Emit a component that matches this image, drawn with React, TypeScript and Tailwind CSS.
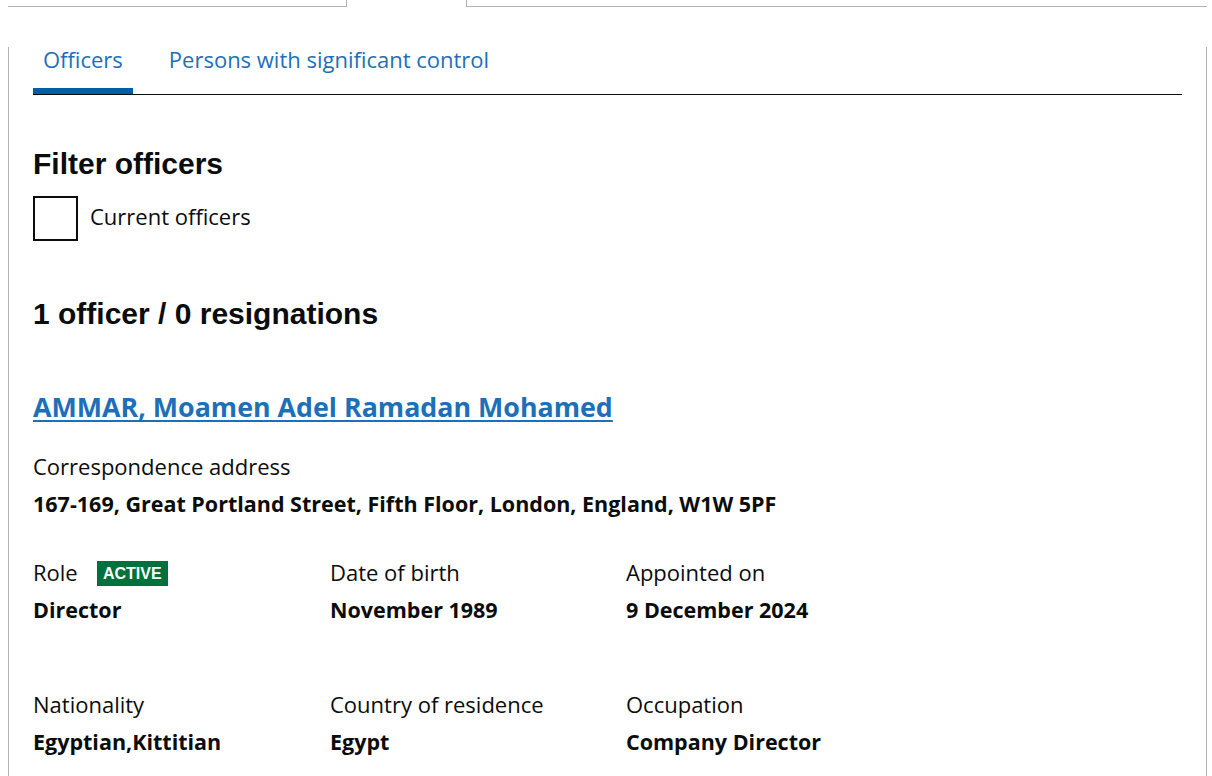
const FONT = "font-['Open_Sans',_'Liberation_Sans',_sans-serif]";
const HEAD = "font-['Liberation_Sans',_Arial,_sans-serif]";

type Field = { label: string; value: string; badge?: string };

const fields: Field[] = [
  { label: 'Role', value: 'Director', badge: 'Active' },
  { label: 'Date of birth', value: 'November 1989' },
  { label: 'Appointed on', value: '9 December 2024' },
  { label: 'Nationality', value: 'Egyptian,Kittitian' },
  { label: 'Country of residence', value: 'Egypt' },
  { label: 'Occupation', value: 'Company Director' },
];

function FieldBlock({ field }: { field: Field }) {
  return (
    <div>
      <div className="flex items-center h-[25px]">
        <span>{field.label}</span>
        {field.badge && (
          <span
            className={`${HEAD} ml-[19px] mt-[2px] h-[25px] w-[71px] flex items-center justify-center bg-[#00703c] text-white text-[16px] font-bold uppercase`}
          >
            {field.badge}
          </span>
        )}
      </div>
      <div className="mt-[12px] font-bold text-[21.5px]">{field.value}</div>
    </div>
  );
}

export default function App() {
  return (
    <div className={`${FONT} w-[1212px] h-[776px] overflow-hidden bg-white text-[#0b0c0c] text-[22px] leading-[25px]`}>
      <div className="ml-[8px] w-[1199px]">
        {/* bottom edge of the outer tabs */}
        <div className="flex h-[7px]">
          <div className="w-[338px] border-b border-[#b1b4b6]"></div>
          <div className="w-[121px] border-x border-[#b1b4b6]"></div>
          <div className="flex-1 border-b border-[#b1b4b6]"></div>
        </div>

        <div className="border-x border-b border-[#b1b4b6] px-[24px] pb-[40px]">
          <div className="mt-[40px] flex border-b border-[#0b0c0c]">
            <a href="#" className="block px-[10px] pb-[16px] border-b-[6px] border-[#005ea5] text-[#1d70b8]">
              Officers
            </a>
            <a href="#" className="block ml-[26px] px-[10px] pb-[16px] border-b-[6px] border-transparent text-[#1d70b8]">
              Persons with significant control
            </a>
          </div>

          <h2 className={`${HEAD} mt-[51px] text-[30px] leading-[36px] font-bold`}>Filter officers</h2>
          <label className="mt-[14px] flex items-center">
            <span className="w-[45px] h-[45px] border-2 border-[#0b0c0c] bg-white"></span>
            <span className="ml-[12px] mb-[4px]">Current officers</span>
          </label>

          <h2 className={`${HEAD} mt-[55px] text-[30px] leading-[36px] font-bold`}>1 officer / 0 resignations</h2>

          <a
            href="#"
            className="block mt-[57px] text-[26.8px] leading-[35px] font-bold text-[#1d70b8] underline decoration-2 underline-offset-[3px]"
          >
            AMMAR, Moamen Adel Ramadan Mohamed
          </a>

          <div className="mt-[30px]">Correspondence address</div>
          <div className="mt-[12px] font-bold text-[21.5px]">
            167-169, Great Portland Street, Fifth Floor, London, England, W1W 5PF
          </div>

          <div className="mt-[44px] grid grid-cols-[297px_296px_296px] gap-y-[70px]">
            {fields.map((f) => (
              <FieldBlock key={f.label} field={f} />
            ))}
          </div>
        </div>
      </div>
    </div>
  );
}
